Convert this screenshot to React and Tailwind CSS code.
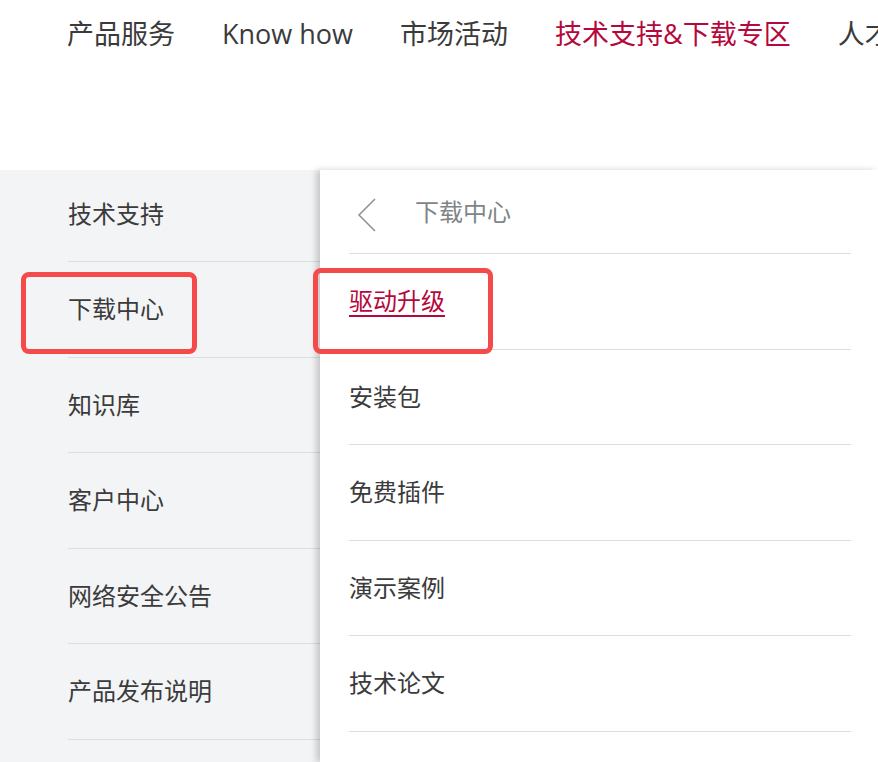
const navItems = ['产品服务', 'Know how', '市场活动', '技术支持&下载专区', '人才招聘']
const sideItems = ['下载中心', '知识库', '客户中心', '网络安全公告', '产品发布说明']
const subItems = ['安装包', '免费插件', '演示案例', '技术论文']

function BackChevron() {
  return (
    <svg width="20" height="34" viewBox="0 0 20 34" fill="none" className="mt-[7px] shrink-0">
      <polyline points="18,1 2,17 18,33" stroke="#8f8f8f" strokeWidth="1.5" />
    </svg>
  )
}

export default function App() {
  return (
    <div className="relative h-[762px] w-[878px] overflow-hidden bg-white font-['Open_Sans','Noto_Sans_CJK_SC',sans-serif] text-[#3b3b3b]">
      <nav className="flex h-[68px] items-center gap-[47px] whitespace-nowrap pl-[67px] text-[27px]">
        {navItems.map((item, i) => (
          <span key={item} className={i === 3 ? 'text-[#b5083c]' : ''}>
            {item}
          </span>
        ))}
      </nav>

      <div className="mt-[102px] flex h-[592px]">
        {/* side column */}
        <div className="w-[320px] shrink-0 bg-[#f3f4f6] pl-[68px] text-[24px]">
          <div className="flex h-[92px] items-center border-b border-[#dcdde0] pb-[4px]">技术支持</div>
          {sideItems.map((item) => (
            <div key={item} className="flex h-[95.5px] items-center border-b border-[#dcdde0]">
              {item}
            </div>
          ))}
        </div>

        {/* sub panel */}
        <div className="relative z-10 flex-1 bg-white pl-[29px] pr-[27px] text-[24px] shadow-[-4px_0_6px_rgba(0,0,0,0.18)]">
          <div className="flex h-[84px] items-center gap-[38px] border-b border-[#dcdde0] pl-[8px]">
            <BackChevron />
            <span className="text-[#7e8589]">下载中心</span>
          </div>
          <div className="flex h-[95.5px] items-center border-b border-[#dcdde0]">
            <a className="text-[#b5083c] underline underline-offset-[5px]">驱动升级</a>
          </div>
          {subItems.map((item) => (
            <div key={item} className="flex h-[95.5px] items-center border-b border-[#dcdde0]">
              {item}
            </div>
          ))}
        </div>
      </div>

      {/* highlight boxes */}
      <div className="absolute left-[21px] top-[272px] z-20 h-[82px] w-[176px] rounded-lg border-[5px] border-[#f44a49]" />
      <div className="absolute left-[313px] top-[268px] z-20 h-[86px] w-[180px] rounded-lg border-[5px] border-[#f44a49]" />
    </div>
  )
}
